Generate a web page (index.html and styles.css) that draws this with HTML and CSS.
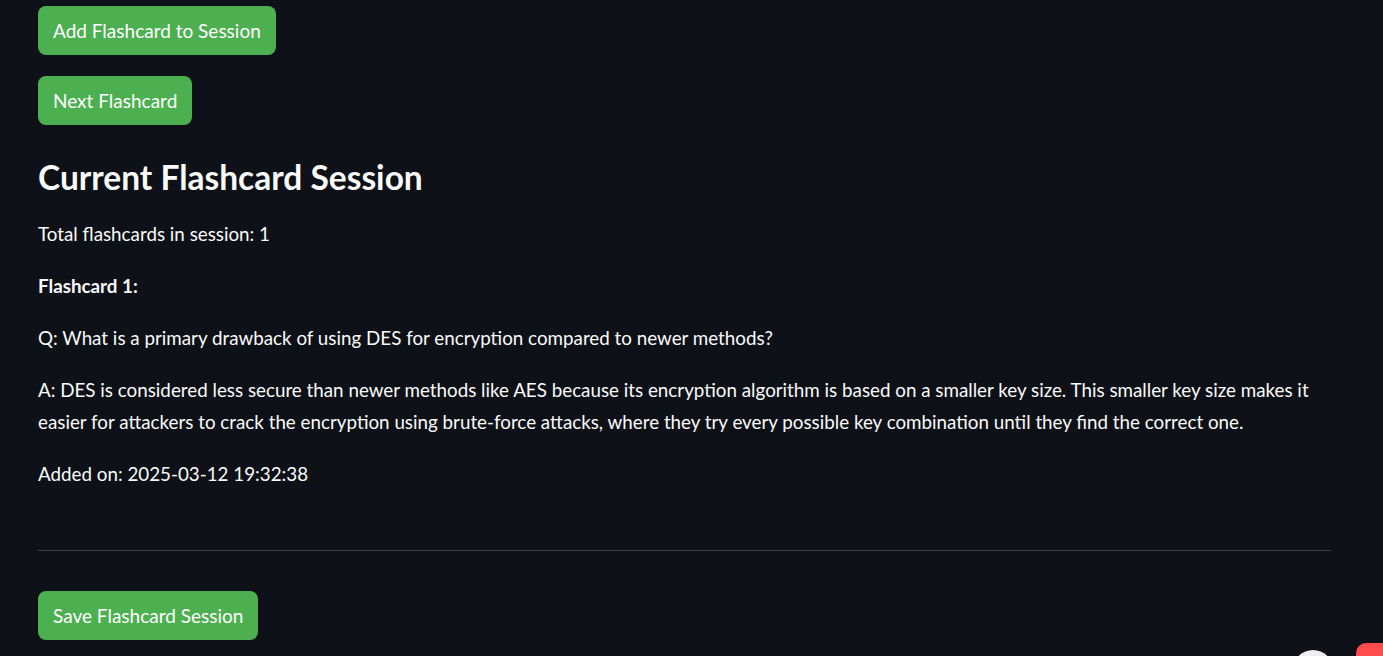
FILE: index.html
```html
<!DOCTYPE html>
<html lang="en">
<head>
<meta charset="utf-8">
<title>Flashcards</title>
<link rel="stylesheet" href="styles.css">
</head>
<body>
<main class="main">
  <button class="btn">Add Flashcard to Session</button>
  <button class="btn">Next Flashcard</button>
  <h3 class="title">Current Flashcard Session</h3>
  <p class="para">Total flashcards in session: 1</p>
  <p class="para"><strong>Flashcard 1:</strong></p>
  <p class="para">Q: What is a primary drawback of using DES for encryption compared to newer methods?</p>
  <p class="para">A: DES is considered less secure than newer methods like AES because its encryption algorithm is based on a smaller key size. This smaller key size makes it easier for attackers to crack the encryption using brute-force attacks, where they try every possible key combination until they find the correct one.</p>
  <p class="para">Added on: 2025-03-12 19:32:38</p>
  <hr class="divider">
  <button class="btn">Save Flashcard Session</button>
</main>
<div class="corner">
  <div class="float-circle"></div>
  <div class="float-badge"></div>
</div>
</body>
</html>
```
FILE: styles.css
```css
html, body {
  margin: 0;
  padding: 0;
  background: #0e1117;
  height: 100%;
  overflow: hidden;
}
body {
  font-family: "Source Sans Pro", Lato, "Noto Sans", sans-serif;
  color: #fafafa;
}
.main {
  display: flex;
  flex-direction: column;
  align-items: flex-start;
  padding: 6px 52px 0 38px;
}
.btn {
  height: 49px;
  padding: 0 15px;
  background: #4caf50;
  color: #ffffff;
  border: none;
  border-radius: 8px;
  font-family: inherit;
  font-size: 19px;
  margin: 0 0 21px 0;
}
.title {
  font-size: 33.5px;
  font-weight: 700;
  line-height: 44px;
  margin: 9px 0 19px 0;
}
.para {
  font-size: 18.8px;
  line-height: 32px;
  margin: 0 0 20px 0;
}
.para strong { font-weight: 700; }
.divider {
  align-self: stretch;
  border: none;
  border-top: 1px solid #3d3f47;
  margin: 40px 0 40px 0;
}
.corner {
  position: fixed;
  left: 1280px;
  top: 636px;
  width: 103px;
  height: 20px;
  overflow: hidden;
}
.float-circle {
  position: absolute;
  left: 13px;
  top: 14px;
  width: 40px;
  height: 40px;
  border-radius: 50%;
  background: #f0f0f2;
}
.float-badge {
  position: absolute;
  left: 76px;
  top: 7px;
  width: 60px;
  height: 40px;
  border-radius: 10px;
  background: #ff4b4b;
}
```
